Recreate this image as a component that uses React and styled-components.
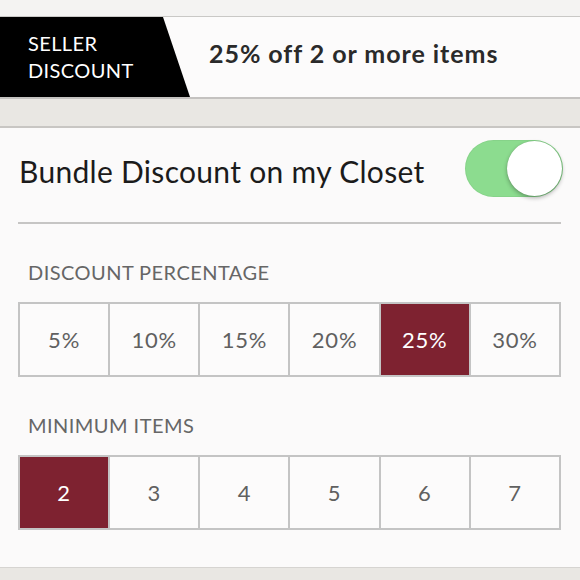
import React, { useState } from "react";
import styled, { createGlobalStyle } from "styled-components";

const Global = createGlobalStyle`
  html, body {
    margin: 0;
    padding: 0;
    background: #e9e7e3;
  }
  body {
    font-family: "Lato", "Open Sans", sans-serif;
    -webkit-font-smoothing: antialiased;
  }
`;

const Page = styled.div`
  width: 580px;
  height: 580px;
  overflow: hidden;
  display: flex;
  flex-direction: column;
  background: #e9e7e3;
`;

const TopStrip = styled.div`
  height: 16px;
  flex: none;
  background: #f4f3f2;
  border-bottom: 1px solid #c9c8c6;
`;

const Banner = styled.div`
  height: 80px;
  flex: none;
  display: flex;
  align-items: center;
  background: #fcfbfb;
  border-bottom: 2px solid #c4c2c0;
`;

const Tag = styled.div`
  align-self: stretch;
  width: 190px;
  flex: none;
  background: #000;
  clip-path: polygon(0 0, 163px 0, 190px 100%, 0 100%);
  color: #fff;
  display: flex;
  flex-direction: column;
  justify-content: center;
  padding: 0 0 0 28px;
  box-sizing: border-box;
  font-size: 20px;
  line-height: 27px;
  letter-spacing: 0.4px;
`;

const Headline = styled.div`
  margin: 0 0 8px 19px;
  font-size: 25px;
  font-weight: 700;
  color: #2a2a2a;
  letter-spacing: 0.95px;
`;

const Band = styled.div`
  height: 27px;
  flex: none;
  border-bottom: 2px solid #c8c6c3;
  background: #e9e7e3;
`;

const Card = styled.div`
  height: 440px;
  flex: none;
  background: #fbfafa;
  padding: 0 19px 0 18px;
  box-sizing: border-box;
  border-bottom: 1px solid #d6d4d1;
`;

const SwitchRow = styled.div`
  height: 94px;
  display: flex;
  align-items: center;
  justify-content: space-between;
  border-bottom: 2px solid #c6c5c4;
`;

const SwitchLabel = styled.div`
  margin: 0 0 8px 1px;
  font-size: 30px;
  color: #1b1b1b;
  letter-spacing: 0.3px;
`;

const Toggle = styled.button`
  position: relative;
  width: 98px;
  height: 57px;
  margin: 0 -2px 14px 0;
  border: none;
  padding: 0;
  border-radius: 29px;
  background: ${(p) => (p.$on ? "#8cdc8f" : "#ddd")};
  box-shadow: inset 0 0 0 1px rgba(0, 0, 0, 0.04);
  cursor: pointer;
`;

const Knob = styled.span`
  position: absolute;
  top: 1px;
  left: ${(p) => (p.$on ? "42px" : "1px")};
  width: 55px;
  height: 55px;
  border-radius: 50%;
  background: #fff;
  box-shadow: 0 2px 4px rgba(0, 0, 0, 0.3), 0 0 1px rgba(0, 0, 0, 0.2);
`;

const SectionLabel = styled.div`
  margin: 36px 0 0 10px;
  height: 24px;
  font-size: 20px;
  line-height: 24px;
  color: #666;
  letter-spacing: 0.45px;
`;

const Options = styled.div`
  margin-top: 18px;
  display: grid;
  grid-template-columns: repeat(6, 1fr);
  border: 2px solid #c4c4c4;
  background: #c4c4c4;
  gap: 2px;
  height: 75px;
  box-sizing: border-box;
`;

const Option = styled.button`
  border: none;
  padding: 0;
  font-family: inherit;
  font-size: 22px;
  font-weight: 400;
  letter-spacing: 0.8px;
  color: ${(p) => (p.$active ? "#fff" : "#606060")};
  background: ${(p) => (p.$active ? "#7e2230" : "#fcfbfb")};
  cursor: pointer;
`;

const percents = ["5%", "10%", "15%", "20%", "25%", "30%"];
const counts = ["2", "3", "4", "5", "6", "7"];

export default function App() {
  const [on, setOn] = useState(true);
  const [pct, setPct] = useState("25%");
  const [min, setMin] = useState("2");

  return (
    <Page>
      <Global />
      <TopStrip />
      <Banner>
        <Tag>
          <span>SELLER</span>
          <span>DISCOUNT</span>
        </Tag>
        <Headline>
          {pct} off {min} or more items
        </Headline>
      </Banner>
      <Band />
      <Card>
        <SwitchRow>
          <SwitchLabel>Bundle Discount on my Closet</SwitchLabel>
          <Toggle $on={on} onClick={() => setOn(!on)} aria-label="Bundle discount">
            <Knob $on={on} />
          </Toggle>
        </SwitchRow>
        <SectionLabel>DISCOUNT PERCENTAGE</SectionLabel>
        <Options>
          {percents.map((v) => (
            <Option key={v} $active={v === pct} onClick={() => setPct(v)}>
              {v}
            </Option>
          ))}
        </Options>
        <SectionLabel>MINIMUM ITEMS</SectionLabel>
        <Options>
          {counts.map((v) => (
            <Option key={v} $active={v === min} onClick={() => setMin(v)}>
              {v}
            </Option>
          ))}
        </Options>
      </Card>
    </Page>
  );
}
